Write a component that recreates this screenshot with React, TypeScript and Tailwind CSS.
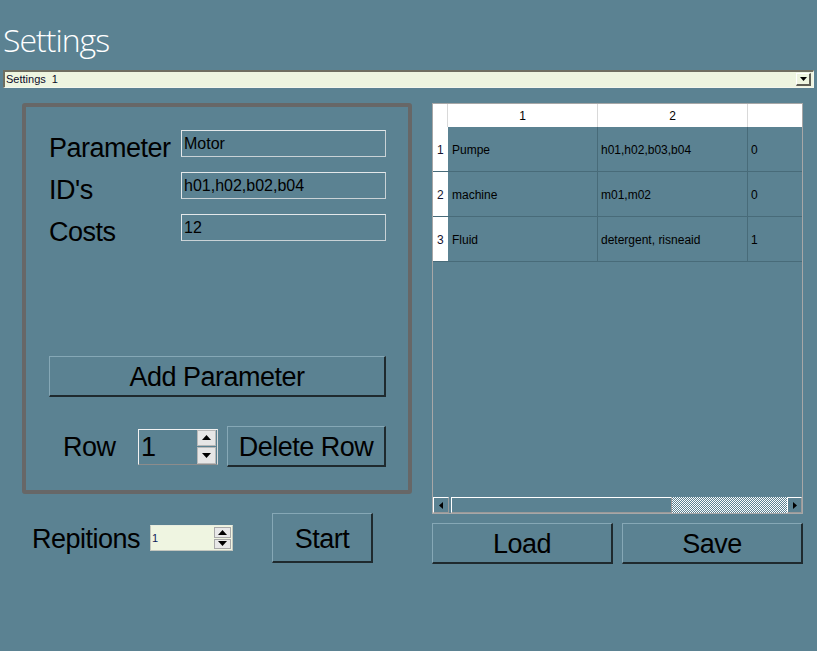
import React from "react";

const BG = "bg-[#5b8292]";

function Btn({ label, className }: { label: string; className: string }) {
  return (
    <div
      className={`${className} flex items-center justify-center pt-[3px] border-t border-l border-t-[#86a8b6] border-l-[#86a8b6] border-b-2 border-r-2 border-b-[#1f2a2e] border-r-[#1f2a2e] text-[27px] leading-none tracking-[-0.5px] text-black`}
    >
      {label}
    </div>
  );
}

function Arrow({ dir, size = 7 }: { dir: "up" | "down" | "left" | "right"; size?: number }) {
  const h = Math.ceil(size / 2);
  let pts = "";
  if (dir === "up") pts = `0,${h} ${size},${h} ${size / 2},0`;
  if (dir === "down") pts = `0,0 ${size},0 ${size / 2},${h}`;
  if (dir === "left") pts = `${h},0 ${h},${size} 0,${size / 2}`;
  if (dir === "right") pts = `0,0 0,${size} ${h},${size / 2}`;
  const w = dir === "up" || dir === "down" ? size : h;
  const hh = dir === "up" || dir === "down" ? h : size;
  return (
    <svg width={w} height={hh} viewBox={`0 0 ${w} ${hh}`}>
      <polygon points={pts} fill="#000" />
    </svg>
  );
}

function Input({ value }: { value: string }) {
  return (
    <div className="w-[205px] h-[27px] border border-[#e4e8ea] border-b-[#c9d2d6] border-r-[#c9d2d6] flex items-center pl-[2px] text-[16px] text-black leading-none">
      {value}
    </div>
  );
}

const rows = [
  ["1", "Pumpe", "h01,h02,b03,b04", "0"],
  ["2", "machine", "m01,m02", "0"],
  ["3", "Fluid", "detergent, risneaid", "1"],
];

export default function App() {
  return (
    <div className={`w-[817px] h-[651px] ${BG} overflow-hidden font-['Liberation_Sans',Arial,sans-serif]`}>
      <div className="h-[70px] pl-[3px] pt-[24px]">
        <div className="font-['Open_Sans',sans-serif] font-light text-[32px] leading-none tracking-[-1px] text-white">
          Settings
        </div>
      </div>

      <div className="mx-[3px] h-[18px] bg-[#eef5e0] border-t-2 border-l-2 border-t-[#6f6e60] border-l-[#6f6e60] border-b border-r border-b-[#f4f7ee] border-r-[#f4f7ee] flex items-center justify-between">
        <span className="pl-[1px] text-[11px] leading-none text-[#0b0b2a] whitespace-pre">Settings  1</span>
        <div className="w-[15px] h-[13px] mr-[2px] bg-[#eef5e0] border-t border-l border-t-white border-l-white border-b-2 border-r-2 border-b-[#5e5e55] border-r-[#5e5e55] flex items-center justify-center">
          <Arrow dir="down" size={7} />
        </div>
      </div>

      <div className="flex pt-[15px]">
        {/* left column */}
        <div className="ml-[22px] w-[390px] flex flex-col">
          <div className="h-[391px] border-4 border-[#676767] rounded-[3px] pt-[23px] pl-[23px] pr-[22px] flex flex-col">
            <div className="flex flex-col gap-[15px]">
              {[
                ["Parameter", "Motor"],
                ["ID's", "h01,h02,b02,b04"],
                ["Costs", "12"],
              ].map(([l, v]) => (
                <div key={l} className="h-[27px] flex items-start">
                  <div className="w-[132px] mt-[5px] text-[27px] leading-none tracking-[-0.5px] text-black whitespace-nowrap">
                    {l}
                  </div>
                  <Input value={v} />
                </div>
              ))}
            </div>

            <Btn label="Add Parameter" className="mt-[115px] w-[337px] h-[41px]" />

            <div className="mt-[29px] h-[41px] flex items-center">
              <div className="ml-[14px] w-[75px] pt-[2px] text-[27px] leading-none tracking-[-0.5px] text-black">Row</div>
              <div className="w-[80px] h-[36px] flex border border-t-[#f2f2f2] border-l-[#f2f2f2] border-b-[#8c8c8c] border-r-[#dcdcdc]">
                <div className="flex-1 flex items-center pl-[2px] pt-[2px] text-[27px] leading-none text-black">1</div>
                <div className="w-[20px] flex flex-col gap-[1px] pr-[1px] py-[0px]">
                  <div className="flex-1 bg-[#e6e6e6] border border-[#b8b8b8] flex items-center justify-center">
                    <Arrow dir="up" size={9} />
                  </div>
                  <div className="flex-1 bg-[#e6e6e6] border border-[#b8b8b8] flex items-center justify-center">
                    <Arrow dir="down" size={9} />
                  </div>
                </div>
              </div>
              <Btn label="Delete Row" className="ml-[9px] w-[159px] h-[41px]" />
            </div>
          </div>

          <div className="mt-[19px] h-[50px] flex items-center">
            <div className="ml-[10px] w-[118px] pt-[3px] text-[27px] leading-none tracking-[-0.5px] text-black">Repitions</div>
            <div className="w-[83px] h-[26px] bg-[#eff5e1] border border-[#c4c7bf] border-t-[#e9ede0] flex">
              <div className="flex-1 flex items-center pl-[1px] pt-[1px] text-[11px] leading-none text-[#10205a]">1</div>
              <div className="w-[18px] flex flex-col gap-[1px] pr-[1px] py-[1px]">
                <div className="flex-1 bg-[#e8e8e8] border border-[#a9a9a9] flex items-center justify-center">
                  <Arrow dir="up" size={9} />
                </div>
                <div className="flex-1 bg-[#e8e8e8] border border-[#a9a9a9] flex items-center justify-center">
                  <Arrow dir="down" size={9} />
                </div>
              </div>
            </div>
            <Btn label="Start" className="ml-[39px] w-[101px] h-[50px]" />
          </div>
        </div>

        {/* right column */}
        <div className="ml-[20px] w-[371px] flex flex-col">
          <div className="h-[411px] border border-[#a7a7a7] flex flex-col overflow-hidden">
            <div className="h-[23px] flex bg-white text-[12px] leading-none text-black">
              <div className="w-[15px] border-r border-[#d9d9d9]" />
              <div className="w-[150px] border-r border-[#d9d9d9] flex items-center justify-center pt-[1px]">1</div>
              <div className="w-[150px] border-r border-[#d9d9d9] flex items-center justify-center pt-[1px]">2</div>
              <div className="flex-1" />
            </div>
            <div className="flex-1 flex flex-col">
              {rows.map((r) => (
                <div key={r[0]} className="h-[45px] flex text-[12px] leading-none text-black border-b border-[#486b79]">
                  <div className="w-[15px] bg-white flex items-center pl-[4px] pt-[1px] text-[#141430]">{r[0]}</div>
                  <div className="w-[150px] border-r border-[#486b79] flex items-center pl-[4px] pt-[1px]">{r[1]}</div>
                  <div className="w-[150px] border-r border-[#486b79] flex items-center pl-[3px] pt-[1px]">{r[2]}</div>
                  <div className="flex-1 flex items-center pl-[3px] pt-[1px]">{r[3]}</div>
                </div>
              ))}
            </div>
            <div className="h-[16px] flex">
              <div className="w-[16px] border-t border-l border-t-white border-l-white border-b border-r border-b-[#9a9a9a] border-r-[#9a9a9a] flex items-center justify-center">
                <Arrow dir="left" size={7} />
              </div>
              <div className="w-[2px]" />
              <div className="w-[221px] border border-t-white border-l-white border-b-[#9a9a9a] border-r-[#9a9a9a]" />
              <div className="flex-1 bg-[image:repeating-conic-gradient(#ffffff_0_25%,#5b8292_0_50%)] bg-[length:2px_2px]" />
              <div className="w-[15px] border-t border-l border-t-white border-l-white border-b border-r border-b-[#9a9a9a] border-r-[#9a9a9a] flex items-center justify-center">
                <Arrow dir="right" size={7} />
              </div>
            </div>
          </div>
          <div className="mt-[9px] flex gap-[9px]">
            <Btn label="Load" className="w-[181px] h-[41px]" />
            <Btn label="Save" className="w-[181px] h-[41px]" />
          </div>
        </div>
      </div>
    </div>
  );
}
